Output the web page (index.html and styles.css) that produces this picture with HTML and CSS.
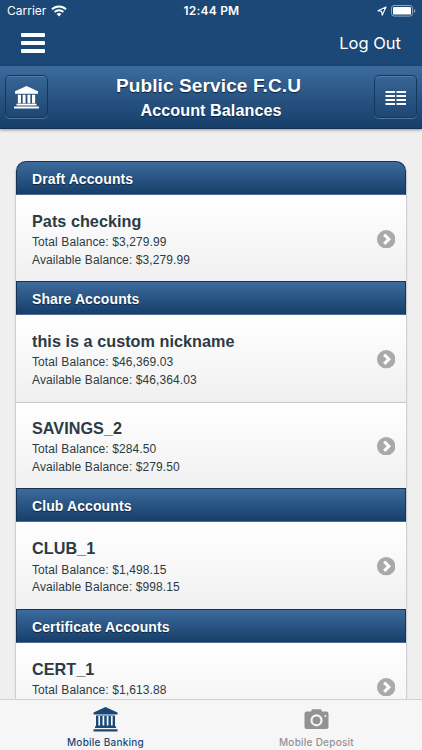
FILE: index.html
```html
<!DOCTYPE html>
<html lang="en">
<head>
	<meta charset="utf-8">
	<title>Account Balances</title>
	<link rel="stylesheet" href="styles.css">
</head>
<body>
<svg class="defs">
	<symbol id="bank" viewBox="0 0 26 24">
		<path d="M13 0L25 5.6V8H1V5.6zM4 9h3.2v9H4zM9 9h3v9H9zM14 9h3v9h-3zM18.8 9H22v9h-3.2zM2.5 18.5h21v1.8h-21zM0 21.5h26v2H0z"/>
	</symbol>
	<symbol id="go" viewBox="0 0 18 18">
		<circle cx="9" cy="9" r="9" fill="#a9a9a9"/>
		<path d="M7 4.5L11.5 9 7 13.5" fill="none" stroke="#fff" stroke-width="3"/>
	</symbol>
</svg>
<div class="app">
	<div class="status">
		<div class="carrier">Carrier
			<svg width="16" height="12" viewBox="0 0 16 12" fill="none" stroke="#fff" stroke-width="2">
				<path d="M1 4.3a10 10 0 0 1 14 0M3.6 7a6.3 6.3 0 0 1 8.8 0"/>
				<path d="M8 11.5L5.6 9.1a3.4 3.4 0 0 1 4.8 0z" fill="#fff" stroke="none"/>
			</svg>
		</div>
		<div class="time">12:44 PM</div>
		<div class="power">
			<svg width="10" height="10" viewBox="0 0 10 10" fill="none" stroke="#fff" stroke-width="1.1" stroke-linejoin="round"><path d="M9 1L.9 4.8l3.7.6.6 3.8z"/></svg>
			<svg width="25" height="12" viewBox="0 0 25 12"><rect x=".5" y=".5" width="21" height="10.6" rx="2.6" fill="none" stroke="#91a7c0"/><rect x="2" y="2" width="18" height="7.6" rx="1.2" fill="#fff"/><path d="M23 4v4q1.3-.6 1.3-2T23 4z" fill="#91a7c0"/></svg>
		</div>
	</div>
	<div class="nav">
		<div class="menu"><i></i><i></i><i></i></div>
		<div class="logout">Log Out</div>
	</div>
	<header>
		<a class="btn"><svg width="27" height="23"><use href="#bank"/></svg></a>
		<div class="titles">
			<h1>Public Service F.C.U</h1>
			<h2>Account Balances</h2>
		</div>
		<a class="btn"><svg width="22" height="16" viewBox="0 0 22 16" fill="#fff"><path d="M.5 1H10v2H.5zM11.500 1H21v2h-9.500zM.5 5H10v2H.5zM11.500 5H21v2h-9.500zM.5 9H10v2H.5zM11.500 9H21v2h-9.500zM.5 13H10v2H.5zM11.500 13H21v2h-9.500z"/></svg></a>
	</header>
	<main>
		<div class="list">
			<div class="group">Draft Accounts</div>
			<div class="row">
				<div><h3>Pats checking</h3><p>Total Balance: $3,279.99</p><p>Available Balance: $3,279.99</p></div>
				<svg class="go"><use href="#go"/></svg>
			</div>
			<div class="group">Share Accounts</div>
			<div class="row">
				<div><h3>this is a custom nickname</h3><p>Total Balance: $46,369.03</p><p>Available Balance: $46,364.03</p></div>
				<svg class="go"><use href="#go"/></svg>
			</div>
			<div class="row">
				<div><h3>SAVINGS_2</h3><p>Total Balance: $284.50</p><p>Available Balance: $279.50</p></div>
				<svg class="go"><use href="#go"/></svg>
			</div>
			<div class="group">Club Accounts</div>
			<div class="row">
				<div><h3>CLUB_1</h3><p>Total Balance: $1,498.15</p><p>Available Balance: $998.15</p></div>
				<svg class="go"><use href="#go"/></svg>
			</div>
			<div class="group">Certificate Accounts</div>
			<div class="row">
				<div><h3>CERT_1</h3><p>Total Balance: $1,613.88</p></div>
				<svg class="go"><use href="#go"/></svg>
			</div>
		</div>
	</main>
	<footer>
		<div class="tab active">
			<svg width="25" height="25" viewBox="0 0 25 25"><path d="M12.5 0L24.5 5.5V7.500H.5V5.500zM3 8.500h19v12H3z"/><path d="M6.200 9v9.500M10.400 9v9.500M14.600 9v9.500M18.800 9v9.500" stroke="#f7f6f7" stroke-width="1.7"/><path d="M2 19.300h21v1.800H2zM.5 22.200h24v2.300H.5z"/></svg>
			<span>Mobile Banking</span>
		</div>
		<div class="tab">
			<svg width="25" height="25" viewBox="0 0 25 25"><path d="M7 4.500L8 2.300h9l1 2.200h4.500a2 2 0 0 1 2 2V20a2 2 0 0 1-2 2h-20a2 2 0 0 1-2-2V6.500a2 2 0 0 1 2-2z"/><circle cx="12.5" cy="13.3" r="5" fill="none" stroke="#f7f6f7" stroke-width="2.2"/><circle cx="21.3" cy="9" r="1" fill="#f7f6f7"/></svg>
			<span>Mobile Deposit</span>
		</div>
	</footer>
</div>
</body>
</html>
```
FILE: styles.css
```css
body, html {
	margin: 0;
	padding: 0;
	height: 100%;
	overflow: hidden;
}
body {
	font-family: "Liberation Sans", Arial, sans-serif;
	color: #2c3b44;
}
h1, h2, h3, p {
	margin: 0;
}
svg {
	display: block;
	flex: none;
}
.defs {
	display: none;
}
.app {
	display: flex;
	flex-direction: column;
	height: 750px;
	background: #efefef;
}

/* top bars */
.status {
	display: grid;
	grid-template-columns: 1fr auto 1fr;
	align-items: center;
	height: 22px;
	padding: 0 6px 0 7px;
	background: #1b4876;
	color: #fff;
	font: 12px/22px Inter, sans-serif;
}
.carrier, .power {
	display: flex;
	align-items: center;
	gap: 4px;
}
.carrier {
	gap: 5px;
}
.time {
	font-weight: 600;
	letter-spacing: .2px;
}
.power {
	justify-content: flex-end;
}
.nav {
	display: flex;
	justify-content: space-between;
	align-items: center;
	height: 44px;
	padding: 0 21px;
	background: #1b4876;
	color: #fff;
}
.menu {
	display: grid;
	gap: 4px;
	width: 24px;
	padding-bottom: 3px;
}
.menu i {
	height: 4px;
	border-radius: 1px;
	background: #fff;
}
.logout {
	font: 16.5px/42px Inter, sans-serif;
	padding-bottom: 2px;
}
header {
	display: flex;
	justify-content: space-between;
	box-sizing: border-box;
	height: 63px;
	padding: 9px 5px 0;
	background: linear-gradient(#3c6b9d, #163e69);
	border-bottom: 1px solid #12304f;
	box-shadow: 0 1px 3px rgba(0,0,0,.4);
	color: #fff;
	text-align: center;
	text-shadow: 0 1px 1px #0b2440;
	z-index: 1;
}
.btn {
	display: flex;
	align-items: center;
	justify-content: center;
	box-sizing: border-box;
	width: 43px;
	height: 43px;
	border: 1px solid #123861;
	border-radius: 5px;
	background: linear-gradient(#376595, #1d4773);
	box-shadow: 0 1px 0 rgba(255,255,255,.25), inset 0 1px 0 rgba(255,255,255,.15);
	fill: #fff;
}
.btn svg {
	margin-top: 2px;
}
h1 {
	font-size: 19px;
	line-height: 22px;
	letter-spacing: .12px;
	padding-right: 5px;
}
h2 {
	font-size: 16.2px;
	line-height: 26px;
	letter-spacing: .05px;
}

/* accounts */
main {
	flex: 1;
	min-height: 0;
	overflow: hidden;
	padding: 32px 15px 0;
}
.list {
	border: 1px solid #cfcfcf;
	border-width: 0 1px;
	border-radius: 12px 12px 0 0;
	box-shadow: 0 1px 2px rgba(0,0,0,.1);
}
.group {
	box-sizing: border-box;
	height: 33.7px;
	padding-left: 15px;
	border: 1px solid #163354;
	border-bottom-color: #4c6d91;
	background: linear-gradient(#3c6b9d, #163e69);
	color: #fff;
	font-size: 14px;
	font-weight: bold;
	letter-spacing: .1px;
	line-height: 34px;
	text-shadow: 0 1px 1px #0b2440;
}
.group:first-child {
	border-radius: 10px 10px 0 0;
}
.row {
	display: flex;
	justify-content: space-between;
	box-sizing: border-box;
	height: 86.7px;
	padding: 14px 11px 0 16px;
	background: linear-gradient(#fff, #f0f0f0);
}
.row + .row {
	border-top: 1px solid #c8c8c8;
	padding-top: 13px;
}
h3 {
	font-size: 16.2px;
	line-height: 24px;
	letter-spacing: .04px;
	padding-bottom: 1.4px;
}
.row p {
	font-size: 12px;
	line-height: 17.5px;
	letter-spacing: .1px;
}
.go {
	width: 18.5px;
	height: 18.5px;
	margin-top: 21px;
}

/* tab bar */
footer {
	display: flex;
	box-sizing: border-box;
	height: 51px;
	border-top: 1px solid #cfd2d3;
	background: #f7f6f7;
}
.tab {
	flex: 1;
	display: flex;
	flex-direction: column;
	align-items: center;
	padding-top: 7px;
	color: #929292;
	fill: #929292;
	font: 500 10px/12px Inter, sans-serif;
	letter-spacing: .25px;
}
.tab span {
	margin-top: 4px;
}
.active {
	color: #1b4876;
	fill: #1b4876;
}
```
